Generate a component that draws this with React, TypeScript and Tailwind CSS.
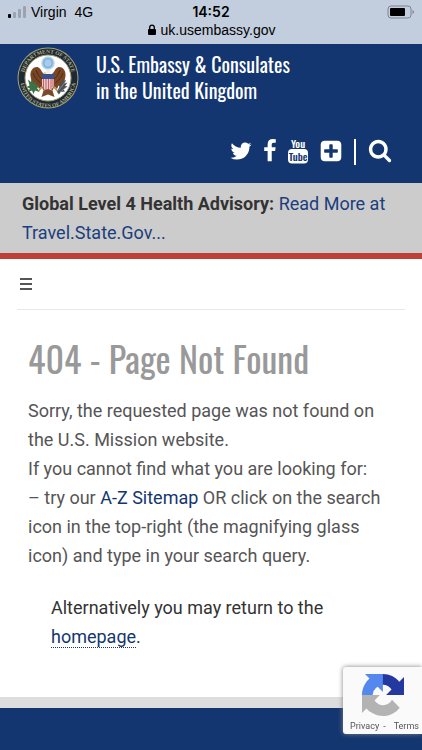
import type { ReactNode } from 'react';

interface GlyphProps {
    viewBox: string;
    className: string;
    d: string;
}

function Glyph({ viewBox, className, d }: GlyphProps) {
    return (
        <svg viewBox={viewBox} className={className} fill="currentColor" aria-hidden="true">
            <path d={d} />
        </svg>
    );
}

function SocialLink({ label, children }: { label: string; children: ReactNode }) {
    return (
        <a href="#" aria-label={label} className="block">
            {children}
        </a>
    );
}

function StatusBar() {
    return (
        <div className="h-11 bg-[#c2cddd] px-2 pt-1 font-['Liberation_Sans',sans-serif] text-black">
            <div className="grid h-4 grid-cols-[1fr_auto_1fr] items-center text-sm leading-4">
                <div className="flex items-center gap-1">
                    <svg viewBox="0 0 19 12" className="h-3 w-[19px]" aria-hidden="true">
                        <rect x="0" y="8" width="3" height="4" rx="1" fill="#000" />
                        <rect x="5" y="6" width="3" height="6" rx="1" fill="#9aa3af" />
                        <rect x="10" y="3" width="3" height="9" rx="1" fill="#9aa3af" />
                        <rect x="15" y="0" width="3" height="12" rx="1" fill="#9aa3af" />
                    </svg>
                    <span>Virgin</span>
                    <span className="pl-1">4G</span>
                </div>
                <span className="font-['Inter',sans-serif] font-semibold">14:52</span>
                <svg viewBox="0 0 28 14" className="h-[14px] w-7 justify-self-end" aria-hidden="true">
                    <rect x="2" y="1" width="23" height="12" rx="3" fill="none" stroke="#7d858f" />
                    <rect x="4" y="3" width="15" height="8" rx="1" fill="#000" />
                    <path d="M26.500 5v4q1.500-.6 1.500-2t-1.500-2z" fill="#7d858f" />
                </svg>
            </div>
            <div className="flex h-5 items-center justify-center gap-1 text-sm">
                <svg viewBox="0 0 10 12" className="h-3 w-[10px]" aria-hidden="true">
                    <rect x="1" y="5" width="8" height="6" rx="1" />
                    <path d="M2.700 6V3.500a2.300 2.300 0 0 1 4.600 0V6" fill="none" stroke="#000" strokeWidth="1.300" />
                </svg>
                <span>uk.usembassy.gov</span>
            </div>
        </div>
    );
}

function Seal() {
    return (
        <svg viewBox="0 0 124 124" className="size-[62px] shrink-0" role="img" aria-label="Department of State seal">
            <defs>
                <path id="sealTop" d="M15 70A48 48 0 1 1 109 70" />
                <path id="sealBottom" d="M7 66A55 55 0 0 0 117 66" />
            </defs>
            <circle cx="62" cy="62" r="61" fill="#a5a077" />
            <circle cx="62" cy="62" r="59" fill="#1c2a38" />
            <circle cx="62" cy="62" r="46" fill="#fff" stroke="#a5a077" strokeWidth="2" />
            <g fill="#b3ad7c" fontFamily="'Liberation Serif', serif" fontSize="11" fontWeight="700">
                <text textAnchor="middle">
                    <textPath href="#sealTop" startOffset="50%">
                        DEPARTMENT OF STATE
                    </textPath>
                </text>
                <text textAnchor="middle">
                    <textPath href="#sealBottom" startOffset="50%">
                        UNITED STATES OF AMERICA
                    </textPath>
                </text>
            </g>
            <circle cx="62" cy="32" r="12" fill="#7fb4e2" stroke="#bcd2e0" strokeWidth="3" />
            <circle cx="62" cy="32" r="7" fill="#a8cdec" />
            <path
                d="M57 55c-8-1-7-12-16-15-10-1-15 9-14 18 1 10 6 16 9 23l5-4 3 7 5-5 4 8 9-8 9 8 4-8 5 5 3-7 5 4c3-7 8-13 9-23 1-9-4-19-14-18-9 3-8 14-16 15z"
                fill="#784625"
            />
            <path
                d="M32 52c3 9 8 14 15 20M38 46c3 9 7 14 12 18M92 52c-3 9-8 14-15 20M86 46c-3 9-7 14-12 18"
                stroke="#4c2b18"
                strokeWidth="2"
                fill="none"
            />
            <path d="M57 55v-5c0-5 9-6 10-1l-1 6z" fill="#f2efe5" />
            <path d="M57 50l-4 2 4 2z" fill="#d5a43b" />
            <path d="M50 54h24v10H50z" fill="#39518c" />
            <path d="M50 64h24v13c0 4-5 8-12 11-7-3-12-7-12-11z" fill="#edc8c9" />
            <path d="M53 64v18M58 64v22M63 64v23M68 64v20M72 64v16" stroke="#c65f69" strokeWidth="2" />
            <path d="M53 87l9-3 9 3 4 13-13-5-13 5z" fill="#7b4a29" />
            <path d="M50 80l-7 8M74 80l7 8" stroke="#c38f39" strokeWidth="3" />
            <path d="M22 65l6 5 1-6 4 8 5-2-1 6 8 3-5 3 5 8-9-3-3 7-3-7-8 3 4-7-7-3 6-3z" fill="#3b7346" />
            <path d="M80 90l10-22 8-2-3 7 6-2-5 7 5 1-8 6 3 4-9 1-3 5z" fill="#4d5058" />
            <path d="M83 87l15-19M86 91l12-10" stroke="#bcbcb7" strokeWidth="1" />
        </svg>
    );
}

function Header() {
    return (
        <header className="bg-[#143670] pb-[18px] text-white">
            <div className="flex gap-[17px] px-[17px] pt-[3px]">
                <Seal />
                <a href="#" className="pt-1 font-['Oswald',sans-serif] text-xl leading-[26px]">
                    U.S. Embassy &amp; Consulates
                    <br />
                    in the United Kingdom
                </a>
            </div>
            <nav aria-label="Social media" className="mt-[30px] flex items-start justify-end gap-3 pr-[30px]">
                <SocialLink label="Twitter">
                    <Glyph
                        viewBox="96 0 1600 1792"
                        className="h-6 w-[22px]"
                        d="M1684 408q-67 98-162 167 1 14 1 42 0 130-38 259.500t-115.500 248.500-184.500 210.500-258 146-323 54.500q-271 0-496-145 35 4 78 4 225 0 401-138-105-2-188-64.500t-114-159.500q33 5 61 5 43 0 85-11-112-23-185.500-111.500t-73.500-205.500v-4q68 38 146 41-66-44-105-115t-39-154q0-88 44-163 121 149 294.500 238.500t371.500 99.500q-8-38-8-74 0-134 94.500-228.500t228.500-94.500q140 0 236 102 109-21 205-78-37 115-142 178 93-10 186-50z"
                    />
                </SocialLink>
                <SocialLink label="Facebook">
                    <Glyph
                        viewBox="463 0 896 1792"
                        className="h-6 w-3"
                        d="M1343 12v264h-157q-86 0-116 36t-30 108v189h293l-39 296h-254v759h-306v-759h-255v-296h255v-218q0-186 104-288.500t277-102.500q147 0 228 12z"
                    />
                </SocialLink>
                <SocialLink label="YouTube">
                    <svg viewBox="0 0 40 52" className="h-[26px] w-5 overflow-visible" aria-hidden="true">
                        <g className="font-['Oswald',sans-serif] font-medium" fontSize="21" textAnchor="middle">
                            <text x="20" y="17" fill="#fff">
                                You
                            </text>
                            <rect x="0" y="20" width="40" height="29" rx="8" fill="#fff" />
                            <text x="20" y="43" fill="#143670">
                                Tube
                            </text>
                        </g>
                    </svg>
                </SocialLink>
                <SocialLink label="More">
                    <Glyph
                        viewBox="96 0 1600 1792"
                        className="h-6 w-[22px]"
                        d="M1408 960v-128q0-26-19-45t-45-19h-320v-320q0-26-19-45t-45-19h-128q-26 0-45 19t-19 45v320h-320q-26 0-45 19t-19 45v128q0 26 19 45t45 19h320v320q0 26 19 45t45 19h128q26 0 45-19t19-45v-320h320q26 0 45-19t19-45zm256-544v960q0 119-84.500 203.500t-203.500 84.500h-960q-119 0-203.500-84.500t-84.500-203.500v-960q0-119 84.500-203.500t203.500-84.500h960q119 0 203.500 84.500t84.500 203.500z"
                    />
                </SocialLink>
                <span className="h-[26px] w-[2px] bg-white" />
                <button type="button" aria-label="Search">
                    <Glyph
                        viewBox="0 64 1792 1792"
                        className="size-6"
                        d="M1216 832q0-185-131.500-316.500t-316.500-131.500-316.500 131.500-131.500 316.500 131.500 316.500 316.500 131.500 316.500-131.500 131.500-316.500zm512 832q0 52-38 90t-90 38q-54 0-90-38l-343-342q-179 124-399 124-143 0-273.500-55.500t-225-150-150-225-55.500-273.500 55.500-273.500 150-225 225-150 273.500-55.500 273.500 55.500 225 150 150 225 55.500 273.500q0 220-124 399l343 343q37 37 37 90z"
                    />
                </button>
            </nav>
        </header>
    );
}

function Recaptcha() {
    return (
        <aside className="fixed right-0 bottom-4 flex h-[67px] w-[79px] flex-col items-center rounded-l-[3px] bg-[#fafafa] pt-[7px] shadow-[0_0_5px_#808080]">
            <svg viewBox="0 0 64 64" className="size-[42px]" role="img" aria-label="reCAPTCHA">
                <path
                    d="M64 31.955l-.033-1.370V4.687l-7.160 7.160C50.948 4.674 42.033.093 32.050.093c-10.400 0-19.622 4.960-25.458 12.640l11.736 11.860a15.550 15.550 0 0 1 4.754-5.334c2.050-1.600 4.952-2.906 8.968-2.906.485 0 .860.057 1.135.163 4.976.393 9.288 3.140 11.828 7.124l-8.307 8.307L64 31.953"
                    fill="#2439a0"
                />
                <path
                    d="M31.862.094l-1.370.033H4.594l7.160 7.160C4.580 13.147 0 22.060 0 32.046c0 10.400 4.960 19.622 12.640 25.458L24.500 45.768a15.550 15.550 0 0 1-5.334-4.754c-1.600-2.050-2.906-4.952-2.906-8.968 0-.485.057-.860.163-1.135.393-4.976 3.140-9.288 7.124-11.828l8.307 8.307L31.860.095"
                    fill="#5488ee"
                />
                <path
                    d="M.001 32.045l.033 1.370v25.898l7.160-7.160c5.860 7.173 14.774 11.754 24.760 11.754 10.400 0 19.622-4.960 25.458-12.640l-11.736-11.860a15.550 15.550 0 0 1-4.754 5.334c-2.050 1.600-4.952 2.906-8.968 2.906-.485 0-.860-.057-1.135-.163-4.976-.393-9.288-3.140-11.828-7.124l8.307-8.307c-10.522.040-22.400.066-27.295-.005"
                    fill="#b3b3b3"
                />
            </svg>
            <div className="mt-1 flex gap-1 pl-1 font-['Roboto',sans-serif] text-[9px] leading-[12px] text-[#555]">
                <a href="#">Privacy</a>
                <span>-</span>
                <a href="#" className="pl-1">
                    Terms
                </a>
            </div>
        </aside>
    );
}

export default function App() {
    return (
        <div className="flex min-h-screen flex-col bg-white font-['Roboto',sans-serif] text-lg leading-[29px]">
            <StatusBar />
            <Header />
            <section className="border-b-[6px] border-[#bf4038] bg-[#ccc] px-[22px] pt-[6px] pb-[6px] text-[#333]">
                <strong>Global Level 4 Health Advisory:</strong>{' '}
                <a href="#" className="text-[#1b3e7d]">
                    Read More at Travel.State.Gov...
                </a>
            </section>
            <main className="px-[17px]">
                <div className="flex h-[51px] items-center border-b border-[#e8e8e8] pl-[3px]">
                    <button type="button" aria-label="Menu" className="flex w-3 flex-col gap-[3px]">
                        <span className="h-[2px] bg-[#555]" />
                        <span className="h-[2px] bg-[#555]" />
                        <span className="h-[2px] bg-[#555]" />
                    </button>
                </div>
                <div className="px-[11px] text-[#555]">
                    <h1 className="mt-[25px] mb-[15px] font-['Oswald',sans-serif] text-[36px] leading-[46px] text-[#999]">
                        404 - Page Not Found
                    </h1>
                    <p>
                        Sorry, the requested page was not found on the U.S. Mission website.
                        <br />
                        If you cannot find what you are looking for:
                        <br />– try our{' '}
                        <a href="#" className="text-[#143670]">
                            A-Z Sitemap
                        </a>{' '}
                        OR click on the search icon in the top-right (the magnifying glass icon) and type in your search
                        query.
                    </p>
                    <p className="mt-[23px] px-[23px] text-[#333]">
                        Alternatively you may return to the{' '}
                        <a href="#" className="border-b border-dotted border-[#143670] text-[#143670]">
                            homepage
                        </a>
                        .
                    </p>
                </div>
            </main>
            <footer className="mt-[46px] flex-1 border-t-[11px] border-[#ddd] bg-[#143670]" />
            <Recaptcha />
        </div>
    );
}
